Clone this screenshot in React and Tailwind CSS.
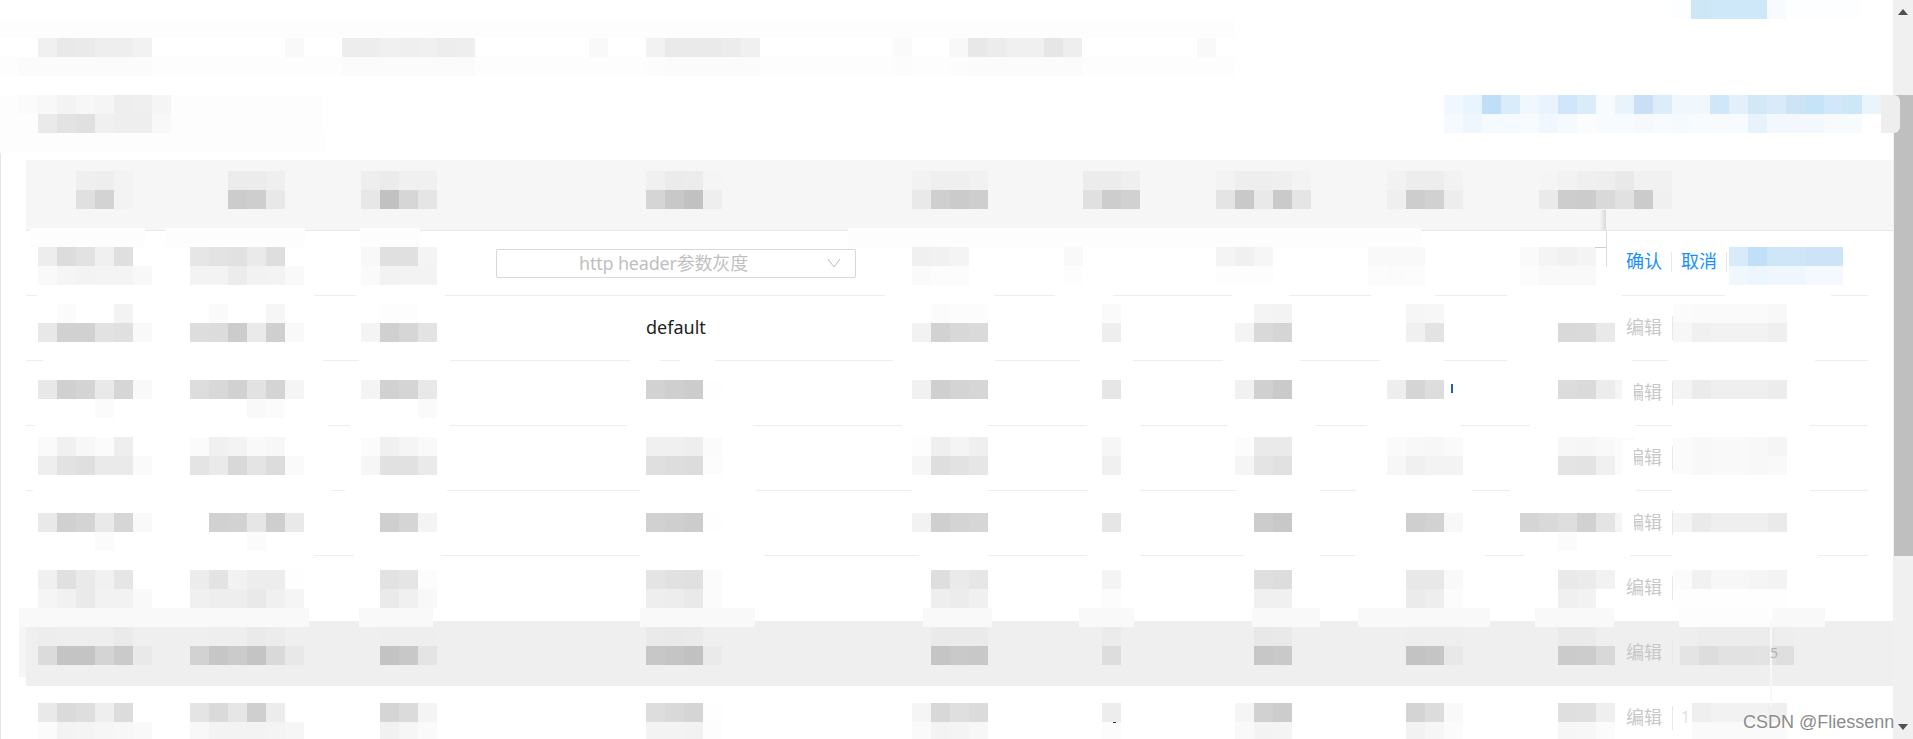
import React from 'react';

// the reference is pixelated: every blurred text is a block of 19px cells
const colStarts = [26, 178, 349, 484, 900, 1071, 1204, 1375, 1527];

const rows = [
  {
    mt: 'mt-[16px]',
    cells: [
      [38, 'ed dc e2 f0 df', 'f9 f5 f3 f4 f4 f8'],
      [190, 'e6 e3 e1 ea de', 'f3 f3 ec f2 f3 f9'],
      [361, 'f8 e0 e0 f4', 'fa f2 f3 f3'],
      null,
      [912, 'f0 f1 f4', 'fa fc fc'],
      [1064, 'f9', 'fd'],
      [1216, 'f4 f0 f6', 'fd fd fd'],
      [1368, 'f9 f9 f9', 'fc fb fc'],
      [1520, 'fa f4 f1 f4', 'fc f9 f9 f9'],
    ],
  },
  {
    mt: 'mt-[8px]',
    cells: [
      [38, '.. fb .. .. f3', 'e8 d1 d1 e2 e0 f9'],
      [190, '.. fa .. .. f6', 'dd dc cc ea cf f9'],
      [361, '.. fd fd', 'f4 d0 d6 e3'],
      [646, null, null],
      [912, '.. fb fc fc', 'f2 d2 d8 da'],
      [1102, 'fa', 'ee'],
      [1235, '.. f4 f3', 'f4 d9 d5'],
      [1406, 'f6 f7', 'f0 e3'],
      [1558, '.. .. ..', 'd9 da e9'],
    ],
    action: [1673, 'fb fa fa fa fa f8', 'f7 f0 f2 f2 f2 ef'],
  },
  {
    mt: 'mt-[19px]',
    cells: [
      [38, 'e8 d0 d4 e9 d6 f9', '.. .. .. fb'],
      [190, 'dd d8 d1 e2 d4 f5', '.. .. .. f9 fb'],
      [361, 'f4 d1 d5 e8', '.. .. .. fa'],
      [646, 'd2 cf cc fe'],
      [912, 'f1 cf d4 d6'],
      [1102, 'e6'],
      [1235, 'f1 d0 ca'],
      [1387, 'ee d5 dd'],
      [1558, 'dc da ec f5'],
    ],
    action: [1673, 'f4 eb ef ef ef ec'],
  },
  {
    mt: 'mt-[11px]',
    cells: [
      [38, 'fa f0 f7 fb ee', 'ee e2 df ea ea fa'],
      [190, 'fb f0 f3 f9 f7', 'e4 ea d8 e4 dc fa'],
      [361, 'fb f0 f5 f9', 'f6 e1 e1 ea'],
      [646, 'f0 f0 ee fb', 'df dd dc fc'],
      [912, 'fd ef f4 ef', 'f6 de e2 e6'],
      [1102, 'f6', 'f0'],
      [1235, 'fc ea ea', 'f5 e4 e1'],
      [1387, 'fa f8 f7 fa', 'f7 f0 f3 f3'],
      [1558, 'f7 f6 f9 fb', 'e4 e3 f0 fb'],
    ],
    action: [1673, 'fb f8 f9 f9 f8 f5', 'fb f8 f9 f9 f8 f9'],
  },
  {
    mt: 'mt-[22px]',
    cells: [
      [38, 'e9 d0 d4 e9 d6 f9', '.. .. .. fb'],
      [209, 'd1 d2 e6 ce e9', '.. .. fb'],
      [380, 'cf d5 f4'],
      [646, 'd1 cf cc fe'],
      [912, 'f2 cf d4 d6'],
      [1102, 'e6'],
      [1254, 'cc c8'],
      [1406, 'cf d2 f8'],
      [1520, 'd5 d9 de d1 e4 f5', '.. .. fb'],
    ],
    action: [1673, 'f4 ea ef ef ef ea'],
  },
  {
    mt: 'mt-[14px]',
    cells: [
      [38, 'f0 e0 ea f1 e6', 'f5 f1 ea f2 f2 f9'],
      [190, 'ec e3 f2 ed ed fe', 'f0 ee ee e9 f0 f5'],
      [380, 'e2 e5 fc', 'ea f0 f8'],
      [646, 'e4 e1 e0 fb', 'ee ed e9 fb'],
      [931, 'de ea e6', 'ee ec f0'],
      [1102, 'f4', 'fc'],
      [1254, 'df dd', 'f0 f0'],
      [1406, 'e8 e8 f9', 'eb ee fc'],
      [1558, 'e9 eb f2', 'f0 f2'],
    ],
    action: [1673, 'fb f1 f7 f7 f5 f3', 'fe fe fe fe fe fe'],
  },
  {
    mt: 'mt-[6px]',
    bg: 'bg-[#efefef]',
    cells: [
      [38, 'ed ee ee ee ea ef', 'db c4 c4 d4 ca e9'],
      [190, 'ef ee ee ea ec ef', 'd2 c6 cb c4 d9 e8'],
      [380, 'ee ee ee', 'c3 c8 e4'],
      [646, 'ea e9 ea', 'c7 c5 c1 ea'],
      [931, 'ea ea ea', 'c5 c9 c8'],
      [1102, 'eb', 'dd'],
      [1254, 'e8 e9', 'c7 c9'],
      [1406, 'ee ee ee', 'c3 c5 e8'],
      [1558, 'ea ea', 'cb cc d8'],
    ],
    action: [1680, 'ee ec ec ec ec ee', 'e4 dd e2 e2 e3 df'],
  },
  {
    mt: 'mt-[17px]',
    cells: [
      [38, 'e9 da de ee dc', 'fb f3 f4 f6 f7 f9'],
      [190, 'e4 da e6 cf ec', 'f8 f3 f3 f3 f4 f6'],
      [380, 'd5 db f4', 'f1 f6 fa'],
      [646, 'dd d9 d5 fe', 'f3 f3 f2 fd'],
      [912, 'f5 d8 df db', 'fa f3 f4 f7'],
      [1102, 'ed', 'fc'],
      [1235, 'f5 d1 cc', 'f9 f3 f4'],
      [1406, 'd4 dc f9', 'f2 f6 fb'],
      [1558, 'df e0 ef', 'f6 f7 fb'],
    ],
    action: [1692, 'ef f2 f2 f2 ef', 'fa fa fa fa fa'],
  },
];

const header = [
  [76, 'ef ee f3', 'e0 d3 f3'],
  [228, 'ec ec ef', 'cc ce e8'],
  [361, 'ee eb f0 f0', 'e7 c1 d6 e5'],
  [646, 'f0 eb ec f5', 'd5 c8 c1 ee'],
  [912, 'f2 ef ef f1', 'e9 cf cb ce'],
  [1083, 'ec ec ef', 'e0 cd d1'],
  [1216, 'f3 ee ee ef f3', 'e4 c9 e9 ca e5'],
  [1387, 'f2 ed ed f2', 'ef cd d1 ed'],
  [1539, 'f5 f2 ef ee e9 f1 f1', 'ea cd cc d9 e1 cb f0'],
];

// visible pieces of the row rules, the rest is wiped by the blur
const rules = [
  [[26, 37], [314, 356], [445, 885], [994, 1055], [1113, 1232], [1289, 1371], [1435, 1507], [1622, 1725], [1831, 1868]],
  [[26, 43], [323, 359], [450, 630], [660, 680], [715, 893], [995, 1080], [1133, 1223], [1300, 1380], [1444, 1507], [1632, 1668], [1815, 1868]],
  [[26, 35], [328, 350], [450, 627], [753, 902], [987, 1087], [1140, 1228], [1315, 1367], [1460, 1530], [1635, 1672], [1810, 1868]],
  [[26, 33], [331, 345], [447, 640], [756, 911], [987, 1087], [1140, 1237], [1320, 1356], [1472, 1510], [1636, 1672], [1810, 1868]],
  [[314, 354], [441, 640], [764, 919], [987, 1087], [1140, 1245], [1320, 1355], [1485, 1524], [1630, 1672], [1818, 1868]],
];

// soft blur leftovers lying over the table
const smears = [
  [0, 133, 325, 20, '#fdfdfd'],
  [30, 228, 115, 19, '#fdfdfd'],
  [165, 228, 140, 19, '#fdfdfd'],
  [360, 228, 60, 19, '#fdfdfd'],
  [848, 228, 573, 19, '#fdfdfd'],
  [19, 608, 290, 19, '#f9f9f9'],
  [359, 608, 74, 19, '#f9f9f9'],
  [640, 608, 115, 19, '#f9f9f9'],
  [923, 608, 69, 19, '#f9f9f9'],
  [1079, 608, 55, 19, '#f9f9f9'],
  [1252, 608, 68, 19, '#f9f9f9'],
  [1358, 608, 132, 19, '#f9f9f9'],
  [1535, 608, 79, 19, '#f9f9f9'],
  [1679, 608, 91, 19, '#fdfdfd'],
  [1772, 608, 53, 19, '#f9f9f9'],
  [1770, 621, 2, 85, '#f8f8f8'],
  [1622, 375, 12, 35, '#ffffff'],
  [1622, 440, 12, 35, '#ffffff'],
  [1622, 505, 12, 35, '#ffffff'],
  [19, 627, 7, 50, '#f5f5f5'],
];

const cellColor = (token) => {
  if (token === '..') return 'transparent';
  return token.length === 2 ? `#${token}${token}${token}` : `#${token}`;
};

const Strip = ({ colors, x = 0 }) => (
  <div className="flex" style={{ marginLeft: x }}>
    {colors.split(' ').map((c, i) => (
      <div key={i} className="w-[19px] h-[19px] shrink-0" style={{ backgroundColor: cellColor(c) }} />
    ))}
  </div>
);

const Mosaic = ({ x = 0, top, bottom, className = '' }) => (
  <div className={`shrink-0 h-[38px] ${className}`} style={{ marginLeft: x }}>
    {top && <Strip colors={top} />}
    {bottom && <Strip colors={bottom} />}
  </div>
);

const Sep = () => <span className="w-px h-[20px] bg-[#e8e8e8] mx-[9px] mt-[21px] shrink-0" />;

const EditAction = ({ mosaic, mt }) => (
  <div className="flex items-start pl-5 text-[18px] text-[#c8c8c8] min-w-0">
    <span className="h-[62px] flex items-center w-[36px] shrink-0 whitespace-nowrap">编辑</span>
    <span className="w-px h-[24px] bg-[#e8e8e8] ml-[10px] mt-[20px] shrink-0" />
    <Mosaic x={mosaic[0] - 1673} top={mosaic[1]} bottom={mosaic[2]} className={mt} />
  </div>
);

const ConfirmAction = () => (
  <div className="flex items-start pl-5 text-[18px] text-[#1890ff] min-w-0">
    <span className="h-[61px] flex items-center w-[36px] shrink-0 whitespace-nowrap">确认</span>
    <Sep />
    <span className="h-[61px] flex items-center w-[36px] shrink-0 whitespace-nowrap">取消</span>
    <Sep />
    <Mosaic
      x={-7}
      top="d7ebfa bfe0f8 cfe6f9 cfe6f9 cde4f8 cde4f8"
      bottom="f0f7fd ecf6fd f0f6fd f0f6fd f3f9fe f3f9fe"
      className="mt-[16px]"
    />
  </div>
);

const GrayDropdown = () => (
  <div className="mt-[18px] ml-3 w-[360px] h-[29px] flex items-center border border-[#d9d9d9] rounded-[2px] text-[18px] text-[#bfbfbf]">
    <span className="flex-1 text-center whitespace-nowrap tracking-[-0.2px] pl-[3px] -mt-[1px]">http header参数灰度</span>
    <svg width="14" height="10" viewBox="0 0 14 10" className="mr-[14px] -mt-[2px]">
      <polyline points="1,1 7,9 13,1" fill="none" stroke="#bfbfbf" strokeWidth="1" />
    </svg>
  </div>
);

const Rule = ({ parts }) => {
  let cursor = 26;
  return (
    <div className="flex h-px">
      {parts.map(([from, to], i) => {
        const gap = from - cursor;
        cursor = to;
        return (
          <div key={i} className="h-px bg-[#eeeeee] shrink-0" style={{ marginLeft: gap, width: to - from }} />
        );
      })}
    </div>
  );
};

const columnsClass = 'grid grid-cols-[152px_171px_135px_416px_171px_133px_171px_152px_79px_262px] items-start';

const App = () => {
  return (
    <div className="relative flex w-full h-[739px] overflow-hidden bg-white [font-family:'Noto_Sans','Noto_Sans_CJK_SC',sans-serif]">
      <div className="w-[1893px] shrink-0">
        {/* top bars */}
        <div className="h-[148px] relative">
          <div className="h-[19px] flex">
            <Strip x={1672} colors="fdfeff cde7f7 cfe8f9 cfe8f9 cfe8f9 f7fbfe fdfeff fdfeff fdfeff fdfeff" />
          </div>
          <div className="w-[1235px] h-[57px] bg-[#fdfdfd] pt-[19px]">
            <div className="flex h-[19px] bg-white">
              <Strip x={38} colors="f0 e9 ea ee ee f2" />
              <Strip x={133} colors="f9" />
              <Strip x={38} colors="ed ed f0 ef f0 ed ee" />
              <Strip x={114} colors="f9" />
              <Strip x={38} colors="f2 ea ea ea ec f0" />
              <Strip x={133} colors="fa" />
              <Strip x={37} colors="f8 e8 ec f0 f0 e6 ee" />
              <Strip x={115} colors="f9" />
            </div>
            <div className="flex h-[19px]">
              <Strip x={19} colors="fb fb fb fb fb fb fb" />
              <Strip x={190} colors="fb fb fb fb fb fb fb" />
              <Strip x={171} colors="fc fb fb fb fb fb" />
              <Strip x={133} colors="fc" />
              <Strip x={37} colors="fc fb fb fb fb fb fb" />
            </div>
          </div>
          <div className="flex justify-between mt-[19px]">
            <div className="w-[323px] bg-[#fdfdfd]">
              <Strip x={19} colors="fb f8 f3 f7 f5 ee ef f5" />
              <Strip x={38} colors="ea e3 e0 f0 ee ee f8" />
            </div>
            <div className="w-[437px] mr-[12px]">
              <Strip colors="f0f7fe e8f4fe c0dff6 d9ecfa f0f7fd e8f3fd d0e6fa daecfa f8fbfe e9f3fc c8dff5 dcedf9 f0f7fd f0f7fd d0e7fa e3f0fb d2e8f7 d9ebf9 cde4f7 c6e4f7 d2e7f9 cce7f6 eaf4fb" />
              <Strip colors="f5fafe eff7fe f5fafe f5fafe f7fbfe f0f7fe f5fafe fafcfe f8fbfe f8fbfe f5f9fd f8fbfe f5fafe f8fbfe f8fbfe f8fbfe e6f3fc f2f8fd f2f8fd f2f8fd f8fbfe f8fbfe" />
            </div>
          </div>
        </div>

        {/* table */}
        <div className="border-l border-[#e4e4e4] pl-[25px] pt-3 h-[591px]">
          <div className={`${columnsClass} h-[70px] bg-[#f6f6f6]`}>
            {header.map((c, i) => (
              <Mosaic key={i} x={c[0] - colStarts[i]} top={c[1]} bottom={c[2]} className="mt-[11px]" />
            ))}
          </div>
          <div className="h-px bg-[#e8e8e8]" />

          {rows.map((row, r) => (
            <div key={r}>
              <div className={`${columnsClass} h-[64px] ${row.bg || ''}`}>
                {row.cells.map((c, i) => {
                  if (r === 0 && i === 3) return <GrayDropdown key={i} />;
                  if (r === 1 && i === 3) {
                    return (
                      <div key={i} className="h-[62px] flex items-center pl-[162px] text-[18px] text-[#222222]">
                        default
                      </div>
                    );
                  }
                  if (!c) return <div key={i} />;
                  return <Mosaic key={i} x={c[0] - colStarts[i]} top={c[1]} bottom={c[2]} className={row.mt} />;
                })}
                {r === 0 ? <ConfirmAction /> : <EditAction mosaic={row.action} mt={row.mt} />}
              </div>
              {rules[r] ? <Rule parts={rules[r]} /> : <div className={`h-px ${row.bg || ''}`} />}
            </div>
          ))}
        </div>
      </div>

      {/* scrollbar */}
      <div className="w-[20px] shrink-0 bg-[#f0f0f0] flex flex-col items-center">
        <svg width="10" height="6" viewBox="0 0 10 6" className="mt-[9px]">
          <polygon points="5,0 10,6 0,6" fill="#505050" />
        </svg>
        <div className="mt-[80px] w-[19px] ml-px h-[461px] bg-[#bfbfbf]" />
        <svg width="10" height="6" viewBox="0 0 10 6" className="mt-[168px]">
          <polygon points="0,0 10,0 5,6" fill="#505050" />
        </svg>
      </div>

      {/* overlays */}
      {smears.map(([x, y, w, h, color], i) => (
        <div key={i} className="absolute" style={{ left: x, top: y, width: w, height: h, backgroundColor: color }} />
      ))}
      <div className="absolute left-[1881px] top-[95px] w-[19px] h-[38px] bg-[#eeeeee] rounded-r-[6px]" />
      <div className="absolute left-[1600px] top-[210px] w-[6px] h-[20px] bg-gradient-to-r from-transparent to-[#d8d8d8]" />
      <div className="absolute left-[1606px] top-[230px] w-px h-[37px] bg-[#dddddd]" />
      <div className="absolute left-[1595px] top-[247px] w-[11px] h-px bg-[#cccccc]" />
      <div className="absolute left-[1451px] top-[384px] w-[2px] h-[9px] bg-[#1d5fb0]" />
      <div className="absolute left-[1113px] top-[722px] w-[3px] h-px bg-[#333333]" />
      <span className="absolute left-[1681px] top-[705px] text-[16px] text-[#eadfd6]">1</span>
      <span className="absolute left-[1770px] top-[642px] text-[14px] text-[#b4b4b4]">5</span>
      <span className="absolute left-[1743px] top-[709px] text-[18px] text-[#8c8c8c] whitespace-nowrap [font-family:'Liberation_Sans',sans-serif] [text-shadow:0_0_2px_#ffffff]">
        CSDN @Fliessenn
      </span>
    </div>
  );
};

export default App;
